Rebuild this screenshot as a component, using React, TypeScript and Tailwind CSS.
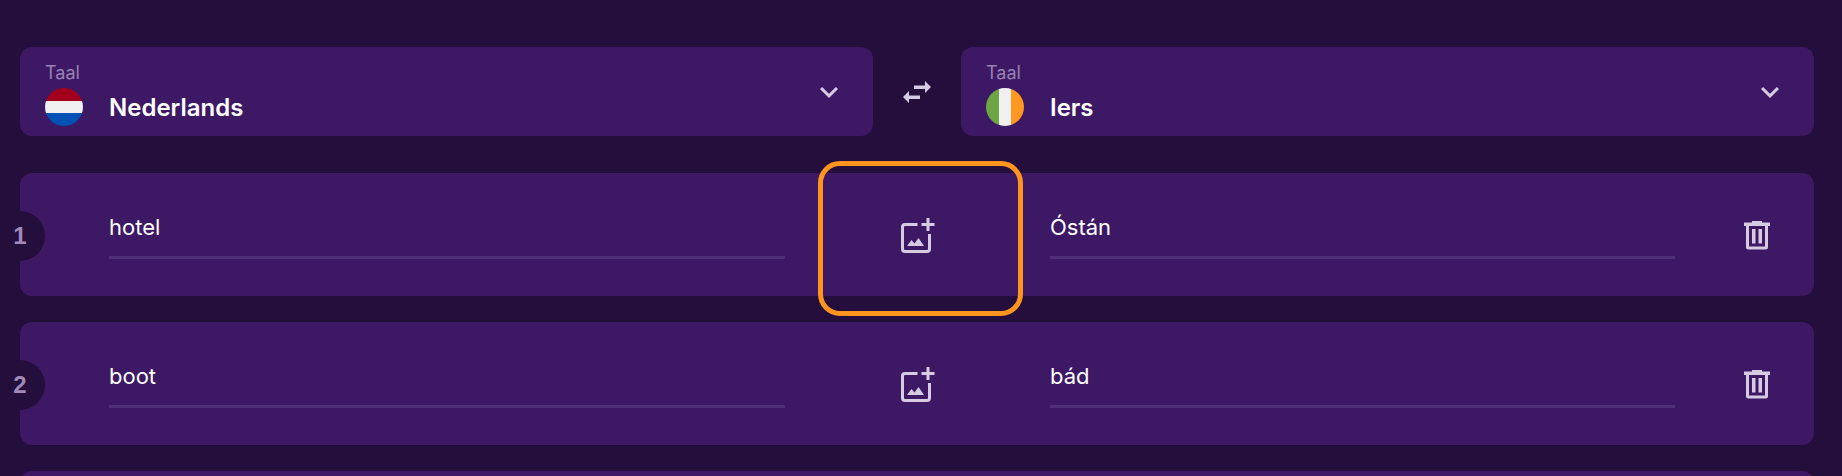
import { useState } from "react";
import { MdExpandMore } from "react-icons/md";

type Entry = { id: number; source: string; target: string };

const entries: Entry[] = [
  { id: 1, source: "hotel", target: "Óstán" },
  { id: 2, source: "boot", target: "bád" },
];

const languages = ["Nederlands", "Iers"];

function Flag({ language }: { language: string }) {
  const dutch = language === "Nederlands";
  return (
    <span
      aria-hidden="true"
      className={`flex size-[38px] shrink-0 overflow-hidden rounded-full ${dutch ? "flex-col" : "flex-row"}`}
    >
      <span className={`flex-1 ${dutch ? "bg-[#a2001d]" : "bg-[#6da544]"}`} />
      <span className="flex-1 bg-[#f0f0f0]" />
      <span className={`flex-1 ${dutch ? "bg-[#0052b4]" : "bg-[#ff9820]"}`} />
    </span>
  );
}

function LanguageCard({
  id,
  value,
  onChange,
}: {
  id: string;
  value: string;
  onChange: (language: string) => void;
}) {
  return (
    <div className="flex items-center rounded-xl bg-[#3d1865] pr-[26px] pl-[25px]">
      <div className="min-w-0 flex-1 pt-[13px] pb-[10px]">
        <label htmlFor={id} className="mb-0.5 block text-lg leading-[26px] text-[#9882b1]">
          Taal
        </label>
        <div className="flex items-center gap-[26px]">
          <Flag language={value} />
          <select
            id={id}
            value={value}
            onChange={(e) => onChange(e.target.value)}
            className="h-[38px] min-w-0 flex-1 appearance-none bg-transparent pt-0.5 text-2xl font-semibold text-white outline-none"
          >
            {languages.map((language) => (
              <option key={language}>{language}</option>
            ))}
          </select>
        </div>
      </div>
      <MdExpandMore aria-hidden="true" className="size-9 shrink-0 text-[#d6cbe0]" />
    </div>
  );
}

function SwapIcon() {
  return (
    <svg viewBox="0 0 28 22" className="h-[22px] w-7" aria-hidden="true">
      <path
        d="M28 6L22 0V4.500H11V8H22V12ZM0 16L6 10V14.500H17V18H6V22Z"
        fill="currentColor"
      />
    </svg>
  );
}

function AddImageIcon() {
  return (
    <svg viewBox="0 0 36 36" className="size-9" aria-hidden="true">
      <path
        d="M18.5 7.5H6Q3.500 7.500 3.500 10V32Q3.500 34.500 6 34.500H28Q30.500 34.500 30.500 32V17"
        fill="none"
        stroke="currentColor"
        strokeWidth="3"
      />
      <path d="M29 1V14M22.500 7.500H35.500" fill="none" stroke="currentColor" strokeWidth="3" />
      <path d="M8 29L12.500 23L15.500 26.500L19.500 21L25 29Z" fill="currentColor" />
    </svg>
  );
}

function TrashIcon() {
  return (
    <svg viewBox="0 0 36 36" className="size-9" aria-hidden="true">
      <path
        d="M13 4H23V5.500H31V9H29V30Q29 32.500 26.500 32.500H9.500Q7 32.500 7 30V9H5V5.500H13ZM10 9V29.500H26V9Z"
        fill="currentColor"
        fillRule="evenodd"
      />
      <path d="M13 12H16.500V26.500H13ZM19.500 12H23V26.500H19.500Z" fill="currentColor" />
    </svg>
  );
}

function WordInput({ label, value }: { label: string; value: string }) {
  return (
    <input
      aria-label={label}
      defaultValue={value}
      className="h-12 w-full min-w-0 flex-1 border-b-[3px] border-[#4f2f75] bg-transparent pb-3.5 text-[22px] text-white outline-none"
    />
  );
}

function WordRow({ entry, highlighted }: { entry: Entry; highlighted: boolean }) {
  return (
    <li className="relative grid min-h-[123px] grid-cols-[1fr_88px_1fr] items-center rounded-xl bg-[#3d1865] pt-px">
      <span className="absolute top-[38px] -left-[25px] flex size-[50px] items-center justify-center rounded-full bg-[#240e3b] font-['Liberation_Sans',sans-serif] text-2xl font-bold text-[#a18ab9]">
        {entry.id}
      </span>
      <div className="flex pr-[88px] pl-[89px]">
        <WordInput label={`Nederlands ${entry.id}`} value={entry.source} />
      </div>
      <div className="relative flex justify-center">
        <button type="button" aria-label="Afbeelding toevoegen" className="text-[#d6cbe0]">
          <AddImageIcon />
        </button>
        {highlighted && (
          <span className="pointer-events-none absolute -top-14 -left-[55px] z-10 h-[155px] w-[205px] rounded-[22px] border-[5px] border-[#ff941f]" />
        )}
      </div>
      <div className="flex items-center pr-[39px] pl-[89px]">
        <WordInput label={`Iers ${entry.id}`} value={entry.target} />
        <button type="button" aria-label="Verwijderen" className="ml-16 text-[#d6cbe0]">
          <TrashIcon />
        </button>
      </div>
    </li>
  );
}

export default function App() {
  const [from, setFrom] = useState("Nederlands");
  const [to, setTo] = useState("Iers");

  return (
    <main className="h-screen overflow-hidden bg-[#240e3b] pt-[47px] pr-7 pl-5 font-['Inter',sans-serif]">
      <div className="grid grid-cols-[1fr_88px_1fr] items-center">
        <LanguageCard id="from-language" value={from} onChange={setFrom} />
        <button
          type="button"
          aria-label="Talen omwisselen"
          className="justify-self-center text-[#d6cbe0]"
          onClick={() => {
            setFrom(to);
            setTo(from);
          }}
        >
          <SwapIcon />
        </button>
        <LanguageCard id="to-language" value={to} onChange={setTo} />
      </div>
      <ul className="mt-[37px] flex flex-col gap-[26px]">
        {entries.map((entry, index) => (
          <WordRow key={entry.id} entry={entry} highlighted={index === 0} />
        ))}
        <li className="min-h-[123px] rounded-xl bg-[#3d1865]" />
      </ul>
    </main>
  );
}
